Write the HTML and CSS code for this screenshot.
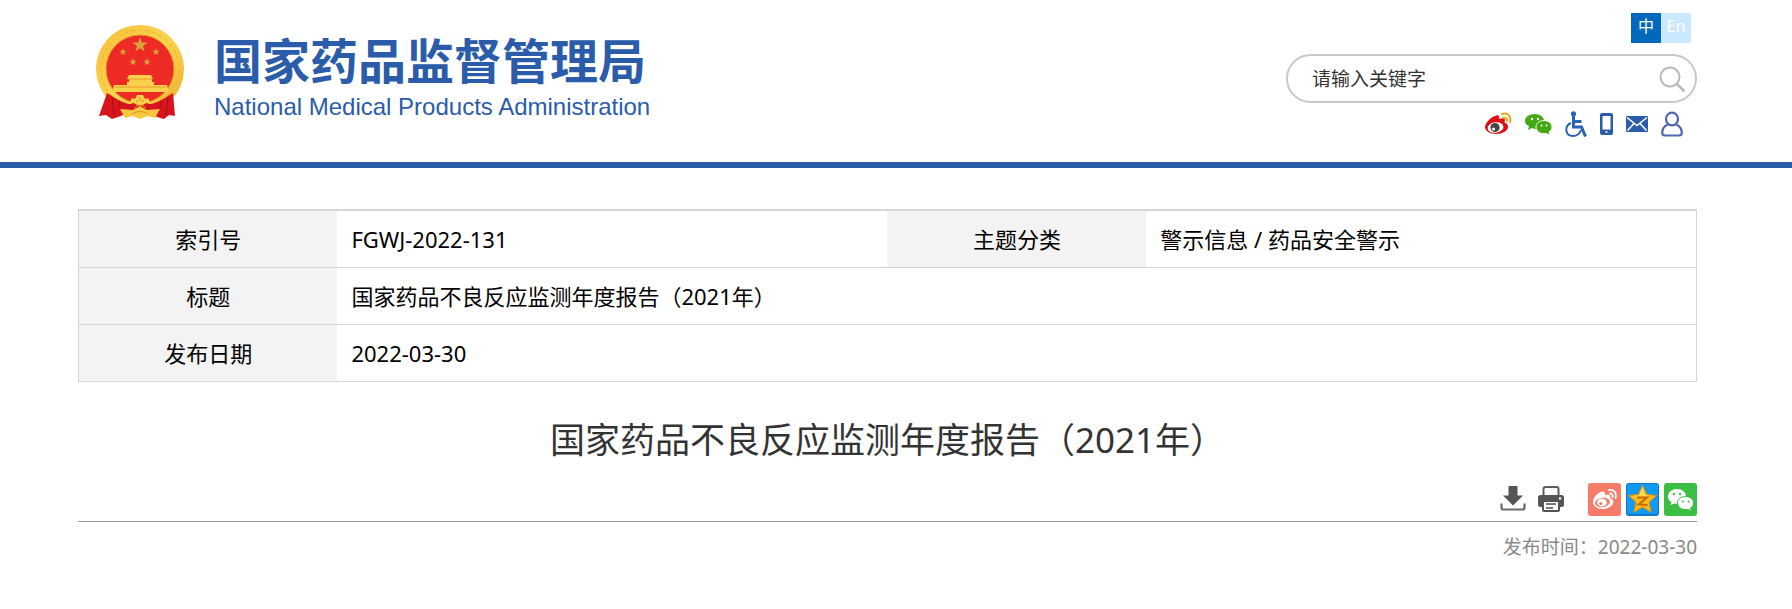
FILE: index.html
```html
<!DOCTYPE html>
<html lang="zh-CN">
<head>
  <meta charset="UTF-8">
  <meta name="viewport" content="width=device-width, initial-scale=1.0">
  <title>国家药品不良反应监测年度报告（2021年）</title>
  <link rel="stylesheet" href="styles.css">
</head>
<body>
  <!-- Header -->
  <header class="header">
    <div class="wrap header-inner">
      <a href="#" class="logo">
        <svg class="emblem" viewBox="0 0 90 96" aria-hidden="true">
          <defs>
            <linearGradient id="gold" x1="0" y1="0" x2="1" y2="1">
              <stop offset="0" stop-color="#f6bd3a"/>
              <stop offset="0.5" stop-color="#fbd44e"/>
              <stop offset="1" stop-color="#f0ae2c"/>
            </linearGradient>
            <path id="star" d="M0-8 1.9-2.5 7.6-2.5 3 1 4.7 6.5 0 3.2-4.7 6.5-3 1-7.6-2.5-1.9-2.5z"/>
          </defs>
          <circle cx="45" cy="45" r="44" fill="url(#gold)"/>
          <circle cx="45" cy="45" r="39" fill="none" stroke="#efb236" stroke-width="1" stroke-dasharray="4 3"/>
          <circle cx="45" cy="45" r="34" fill="#ee2a24" stroke="#e39a28" stroke-width="1"/>
          <use href="#star" x="45" y="21" fill="#dba43b"/>
          <g fill="#dba43b">
            <use href="#star" transform="translate(28 28) scale(.5)"/>
            <use href="#star" transform="translate(61 28) scale(.5)"/>
            <use href="#star" transform="translate(38 38) scale(.5)"/>
            <use href="#star" transform="translate(52 38) scale(.5)"/>
          </g>
          <path fill="#fbd04a" d="M34 51h22l2 4h-1v3h2v3h13l2 7H17l2-7h13v-3h2v-3h-2z"/>
          <path stroke="#e59a2a" d="M33 55h24M20 63h51"/>
          <path fill="#d8141c" d="M12 69c8 5 16 10 22 11l11-3 11 3c6-1 14-6 22-11l2 23-6-1-5 4-10-3-17-8-16 8-9 3-6-4-7 1z"/>
          <path fill="none" stroke="#a50f16" d="M17 73l2 18M73 73l-2 18M24 77l1 6M66 77l-1 6"/>
          <path fill="#f9c83f" d="M25 85l13 1 7-4 7 4 13-1-5 9-8-2-7 3-7-3-8 2z"/>
          <path fill="#fbd04a" d="M34 80l3-6 3 1 2-4h6l2 4 3-1 3 6-5-1c-3 3-9 3-12 0z"/>
          <path fill="none" stroke="#d99322" d="M39 84q6-6 12 0M37 90q8-5 16 0M41 76l2 2M45 73v4M49 76l-2 2"/>
        </svg>
        <span class="logo-text">
          <span class="logo-cn">国家药品监督管理局</span>
          <span class="logo-en">National Medical Products Administration</span>
        </span>
      </a>

      <div class="header-right">
        <nav class="lang">
          <a href="#" class="lang-item active">中</a>
          <a href="#" class="lang-item">En</a>
        </nav>
        <form class="search">
          <input type="text" class="search-input" placeholder="请输入关键字" aria-label="请输入关键字">
          <button type="button" class="search-button" aria-label="搜索">
            <svg viewBox="0 0 28 28" width="28" height="28" fill="none" stroke="#b9b9b9">
              <circle cx="12" cy="12" r="9.500" stroke-width="2"/>
              <path d="M19 19l7.500 7.500" stroke-width="2.500"/>
            </svg>
          </button>
        </form>
        <div class="links">
          <a href="#" aria-label="微博">
            <svg viewBox="0 0 27 24" width="27" height="24">
              <path fill="#e00d12" d="M10 4c2-1 4-1 4 1v2c3-1 6-1 6 1 0 1-1 2 0 3 2 0 3 2 3 4 0 4-6 7-12 7S0 19 0 15 6 5 10 4z"/>
              <ellipse cx="10.500" cy="15.500" rx="8" ry="5.200" fill="#fff" transform="rotate(-8 10.500 15.500)"/>
              <circle cx="10" cy="15.500" r="4.600" fill="#4a4545"/>
              <circle cx="8.500" cy="17" r="1.500" fill="#fff"/>
              <path fill="none" stroke="#f0a818" stroke-width="2" stroke-linecap="round" d="M17 2c6-2 9.500 3 8 8M18 6c3-1 4.500 1 4 3"/>
            </svg>
          </a>
          <a href="#" aria-label="微信">
            <svg viewBox="0 0 27 24" width="27" height="24">
              <path fill="#45a914" d="M10 2c5 0 9 3 9 7 0 5-4 8-9 8l-3-1-4 2 1-4C1 13 0 11 0 9c0-4 4-7 10-7z"/>
              <path fill="#45a914" stroke="#fff" stroke-width="1" d="M19 8.500c4 0 8 2.600 8 6.500 0 2-1 4-3 5l1 3-4-1.500c-6 1-10-2.500-10-6.500s4-6.500 8-6.500z"/>
              <g fill="#fff"><circle cx="7" cy="7" r="1.200"/><circle cx="13" cy="7" r="1.200"/><circle cx="16.500" cy="13.500" r="1"/><circle cx="21.500" cy="13.500" r="1"/></g>
            </svg>
          </a>
          <a href="#" aria-label="无障碍">
            <svg viewBox="0 0 22 27" width="22" height="27" fill="none" stroke="#2c62b2">
              <circle cx="8.500" cy="2.800" r="2.600" fill="#2c62b2" stroke="none"/>
              <path stroke-width="3" d="M8.500 5v11h8l4 9.500M8.500 10.500h8"/>
              <path stroke-width="2" d="M6 12c-7 3-6 13 2 13 5 0 7-3 8-6"/>
            </svg>
          </a>
          <a href="#" aria-label="手机版">
            <svg viewBox="0 0 13 22" width="13" height="22">
              <rect width="13" height="22" rx="2" fill="#2a5caa"/>
              <path fill="#fff" d="M2.500 3h8v13.500h-8z"/>
              <circle cx="6.500" cy="19" r="1" fill="#fff"/>
            </svg>
          </a>
          <a href="#" aria-label="邮箱">
            <svg viewBox="0 0 22 16" width="22" height="16">
              <rect width="22" height="16" rx="1" fill="#2a5caa"/>
              <path fill="none" stroke="#fff" stroke-width="1.600" d="M1 1.500l10 8 10-8M1.500 14.500l6.500-7M20.500 14.500l-6.500-7"/>
            </svg>
          </a>
          <a href="#" aria-label="个人中心">
            <svg viewBox="0 0 22 26" width="22" height="26" fill="none" stroke="#5068b0" stroke-width="2.200">
              <ellipse cx="11" cy="8" rx="6" ry="6.300"/>
              <path d="M7 13.500C3 15 1.200 18 1.200 22c0 2 .8 2.500 2.800 2.500h14c2 0 2.800-.5 2.800-2.500 0-4-1.800-7-5.800-8.500"/>
            </svg>
          </a>
        </div>
      </div>
    </div>
  </header>

  <!-- Article -->
  <main class="wrap">
    <table class="info">
      <colgroup>
        <col class="col-label"><col class="col-value"><col class="col-label"><col class="col-value">
      </colgroup>
      <tr>
        <th scope="row">索引号</th>
        <td>FGWJ-2022-131</td>
        <th scope="row">主题分类</th>
        <td>警示信息 / 药品安全警示</td>
      </tr>
      <tr>
        <th scope="row">标题</th>
        <td colspan="3">国家药品不良反应监测年度报告（2021年）</td>
      </tr>
      <tr>
        <th scope="row">发布日期</th>
        <td colspan="3">2022-03-30</td>
      </tr>
    </table>

    <h1 class="title">国家药品不良反应监测年度报告（2021年）</h1>

    <div class="tools">
      <button type="button" class="tool" aria-label="下载">
        <svg viewBox="0 0 26 26" width="26" height="26">
          <path fill="#555" d="M8.500 0h9v9.500h5.500l-10 10-10-10h5.500z"/>
          <path fill="none" stroke="#6a6a6a" stroke-width="2.200" d="M1.500 17.500v4q0 2 2 2h19q2 0 2-2v-4"/>
        </svg>
      </button>
      <button type="button" class="tool" aria-label="打印">
        <svg viewBox="0 0 26 26" width="26" height="26">
          <path fill="#fff" stroke="#5c5c5c" stroke-width="2" d="M5.500 10V3q0-2 2-2h11q2 0 2 2v7"/>
          <rect y="9" width="26" height="12" rx="2.500" fill="#555"/>
          <rect x="5" y="15" width="16" height="10" rx="1" fill="#fff" stroke="#555" stroke-width="2"/>
          <path stroke="#777" stroke-width="2" d="M8 18h10M8 22h7"/>
          <circle cx="22" cy="12.500" r="1.200" fill="#fff"/>
        </svg>
      </button>
      <div class="share">
        <button type="button" aria-label="分享到微博">
          <svg viewBox="0 0 33 33" width="33" height="33">
            <rect width="33" height="33" rx="3" fill="#f67b69"/>
            <path fill="#fff" d="M13 9c3-1 4 0 4 2v1c4-1 6 0 5 3 3 1 4 3 3 5-1 4-6 6-11 6S5 23 5 19s4-9 8-10z"/>
            <ellipse cx="14.500" cy="19.500" rx="7.500" ry="4.800" fill="#f67b69" transform="rotate(-8 14.500 19.500)"/>
            <ellipse cx="14" cy="19.500" rx="4.800" ry="4" fill="#fff"/>
            <circle cx="12.800" cy="20.500" r="1.600" fill="#f67b69"/>
            <path fill="none" stroke="#fff" stroke-width="1.800" stroke-linecap="round" d="M21 7c5-1 8 3 6.500 8M22 10.500c2 0 3 1.500 2.500 3.500"/>
          </svg>
        </button>
        <button type="button" aria-label="分享到QQ空间">
          <svg viewBox="0 0 33 33" width="33" height="33">
            <rect width="33" height="33" rx="3" fill="#1278cc"/>
            <rect x="1" y="1" width="31" height="30" rx="2" fill="#0f9bf3"/>
            <path fill="#fdbb16" stroke="#e58a0b" d="M16.500 2.500l4.200 9 9.800 1-7.500 6.800 2.200 10-8.700-5.200-8.700 5.200 2.200-10-7.500-6.800 9.800-1z"/>
            <path fill="#ffd951" d="M16.500 4l3.500 8 5 1-14 1-6-.800 8-1z"/>
            <path fill="none" stroke="#c66a0a" stroke-width="2" d="M11 14.500h10l-8.500 7 9 .5"/>
          </svg>
        </button>
        <button type="button" aria-label="分享到微信">
          <svg viewBox="0 0 33 33" width="33" height="33">
            <rect width="33" height="33" rx="3" fill="#3bbf42"/>
            <path fill="#fff" d="M13 6c5 0 9 3 9 7.500S18 21 13 21l-3-.6L6.500 22l1-3C5 17.600 4 16 4 13.500 4 9 8 6 13 6z"/>
            <path fill="#fff" stroke="#3bbf42" d="M21.500 13.500c5 0 8 3 8 6.500 0 2-1 4-3 5l1 3-3.500-1.600c-6 1.100-10.500-2.400-10.500-6.400s3.500-6.500 8-6.500z"/>
            <g fill="#3bbf42"><circle cx="10" cy="11" r="1.200"/><circle cx="16" cy="11" r="1.200"/><circle cx="19" cy="18.500" r="1"/><circle cx="24.500" cy="18.500" r="1"/></g>
          </svg>
        </button>
      </div>
    </div>
    <p class="date">发布时间：2022-03-30</p>
  </main>
</body>
</html>
```
FILE: styles.css
```css
* {
  box-sizing: border-box;
}
body {
  margin: 0;
  background: #fff;
  color: #000;
  font-family: "Noto Sans", "Noto Sans CJK SC", sans-serif;
}
a {
  color: inherit;
  text-decoration: none;
}
svg {
  display: block;
}
button {
  padding: 0;
  border: 0;
  background: none;
  cursor: pointer;
}
.wrap {
  margin: 0 95px 0 78px;
}
/* Header */
.header {
  border-bottom: 6px solid #2a5caa;
}
.header-inner {
  display: flex;
  justify-content: space-between;
  height: 162px;
}
.logo {
  display: flex;
  align-items: flex-start;
  gap: 29px;
  padding: 24px 0 0 17px;
  color: #2a5caa;
}
.emblem {
  width: 90px;
  height: 96px;
}
.logo-text {
  display: flex;
  flex-direction: column;
  padding-top: 11px;
}
.logo-cn {
  font-size: 48px;
  font-weight: bold;
  line-height: 52px;
}
.logo-en {
  font-family: "Liberation Sans", Arial, sans-serif;
  font-size: 24px;
  line-height: 40px;
}
.header-right {
  display: flex;
  flex-direction: column;
  align-items: flex-end;
  width: 411px;
  padding-top: 13px;
}
/* Language switch */
.lang {
  display: flex;
  margin-right: 6px;
}
.lang-item {
  width: 30px;
  height: 30px;
  background: #cae8ff;
  color: #fff;
  font-size: 16px;
  line-height: 26px;
  text-align: center;
}
.lang-item.active {
  background: #0069bc;
}
/* Search box */
.search {
  display: flex;
  align-items: center;
  width: 100%;
  height: 49px;
  margin: 11px 0 7px;
  padding: 0 9px 0 24px;
  border: 2px solid #c8c8c8;
  border-radius: 25px;
}
.search-input {
  flex: 1;
  min-width: 0;
  padding: 0;
  border: 0;
  outline: 0;
  background: none;
  font-family: inherit;
  font-size: 19px;
}
.search-input::placeholder {
  color: #333;
  opacity: 1;
}
/* Quick links */
.links {
  display: flex;
  align-items: center;
  gap: 13px;
  height: 28px;
  margin-right: 14px;
}
/* Index table */
.info {
  width: 100%;
  margin-top: 41px;
  border-collapse: collapse;
  table-layout: fixed;
  border: 1px solid #d6d6d6;
  border-top-width: 2px;
  font-size: 22px;
  line-height: 30px;
}
.col-label {
  width: 16%;
}
.col-value {
  width: 34%;
}
.info th,
.info td {
  height: 57px;
  padding: 0 14px;
  border-bottom: 1px solid #d6d6d6;
  text-align: left;
}
.info th {
  background: #f3f3f3;
  font-weight: normal;
  text-align: center;
}
/* Article title and tools */
.title {
  margin: 32px 0 17px;
  color: #333;
  font-size: 35px;
  font-weight: normal;
  line-height: 52px;
  text-align: center;
}
.tools {
  display: flex;
  justify-content: flex-end;
  align-items: center;
  gap: 12px;
  padding-bottom: 5px;
  border-bottom: 1px solid #999;
}
.share {
  display: flex;
  gap: 5px;
  margin-left: 12px;
}
.date {
  margin: 10px 0 0;
  color: #888;
  font-size: 19px;
  line-height: 30px;
  text-align: right;
}
```
